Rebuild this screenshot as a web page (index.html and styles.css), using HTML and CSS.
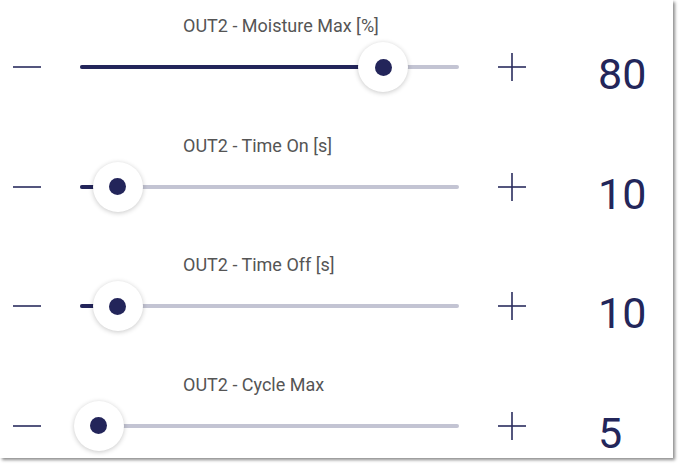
FILE: index.html
```html
<!DOCTYPE html>
<html>
<head>
<meta charset="utf-8">
<link rel="stylesheet" href="styles.css">
</head>
<body>
<div class="card">
  <div class="row">
    <div class="label">OUT2 - Moisture Max [%]</div>
    <div class="controls">
      <svg class="icon minus" width="28" height="28" viewBox="0 0 28 28"><line x1="0" y1="14" x2="28" y2="14"/></svg>
      <div class="slider">
        <div class="track"></div>
        <div class="fill" style="width:80%"></div>
        <div class="thumb" style="left:80%"><span class="dot"></span></div>
      </div>
      <svg class="icon plus" width="28" height="28" viewBox="0 0 28 28"><line x1="0" y1="14" x2="28" y2="14"/><line x1="14" y1="0" x2="14" y2="28"/></svg>
      <div class="value">80</div>
    </div>
  </div>
  <div class="row">
    <div class="label">OUT2 - Time On [s]</div>
    <div class="controls">
      <svg class="icon minus" width="28" height="28" viewBox="0 0 28 28"><line x1="0" y1="14" x2="28" y2="14"/></svg>
      <div class="slider">
        <div class="track"></div>
        <div class="fill" style="width:10%"></div>
        <div class="thumb" style="left:10%"><span class="dot"></span></div>
      </div>
      <svg class="icon plus" width="28" height="28" viewBox="0 0 28 28"><line x1="0" y1="14" x2="28" y2="14"/><line x1="14" y1="0" x2="14" y2="28"/></svg>
      <div class="value">10</div>
    </div>
  </div>
  <div class="row">
    <div class="label">OUT2 - Time Off [s]</div>
    <div class="controls">
      <svg class="icon minus" width="28" height="28" viewBox="0 0 28 28"><line x1="0" y1="14" x2="28" y2="14"/></svg>
      <div class="slider">
        <div class="track"></div>
        <div class="fill" style="width:10%"></div>
        <div class="thumb" style="left:10%"><span class="dot"></span></div>
      </div>
      <svg class="icon plus" width="28" height="28" viewBox="0 0 28 28"><line x1="0" y1="14" x2="28" y2="14"/><line x1="14" y1="0" x2="14" y2="28"/></svg>
      <div class="value">10</div>
    </div>
  </div>
  <div class="row">
    <div class="label">OUT2 - Cycle Max</div>
    <div class="controls">
      <svg class="icon minus" width="28" height="28" viewBox="0 0 28 28"><line x1="0" y1="14" x2="28" y2="14"/></svg>
      <div class="slider">
        <div class="track"></div>
        <div class="fill" style="width:5%"></div>
        <div class="thumb" style="left:5%"><span class="dot"></span></div>
      </div>
      <svg class="icon plus" width="28" height="28" viewBox="0 0 28 28"><line x1="0" y1="14" x2="28" y2="14"/><line x1="14" y1="0" x2="14" y2="28"/></svg>
      <div class="value">5</div>
    </div>
  </div>
</div>
</body>
</html>
```

FILE: styles.css
```css
html, body {
  margin: 0;
  padding: 0;
  background: #ffffff;
}

body {
  font-family: Roboto, "Liberation Sans", sans-serif;
  width: 682px;
  height: 467px;
  overflow: hidden;
}

.card {
  width: 673px;
  height: 458px;
  background: #ffffff;
  box-shadow: 2px 2px 3px rgba(0, 0, 0, 0.45);
  overflow: hidden;
}

.row {
  padding-top: 15px;
  padding-bottom: 27.6px;
}

.label {
  margin-left: 183px;
  font-size: 18px;
  line-height: 22px;
  color: #555555;
  white-space: nowrap;
}

.controls {
  margin-top: 5px;
  height: 50px;
  display: flex;
  align-items: center;
}

.icon {
  flex: none;
  stroke: #2a2c5e;
  stroke-width: 1.6;
  fill: none;
}

.minus {
  margin-left: 13px;
}

.slider {
  flex: none;
  margin-left: 39px;
  width: 379px;
  height: 50px;
  position: relative;
}

.track {
  position: absolute;
  left: 0;
  right: 0;
  top: 23px;
  height: 4px;
  border-radius: 2px;
  background: #c3c4d3;
}

.fill {
  position: absolute;
  left: 0;
  top: 23px;
  height: 4px;
  border-radius: 2px;
  background: #23255a;
}

.thumb {
  position: absolute;
  top: 0;
  width: 50px;
  height: 50px;
  margin-left: -25px;
  border-radius: 50%;
  background: #ffffff;
  box-shadow: 0 1px 5px rgba(0, 0, 0, 0.22);
  display: flex;
  align-items: center;
  justify-content: center;
}

.dot {
  width: 17px;
  height: 17px;
  border-radius: 50%;
  background: #23255a;
}

.plus {
  margin-left: 39px;
}

.value {
  flex: none;
  align-self: flex-start;
  margin-left: 72px;
  margin-top: 7px;
  font-size: 43px;
  line-height: 50px;
  color: #23265a;
}
```
